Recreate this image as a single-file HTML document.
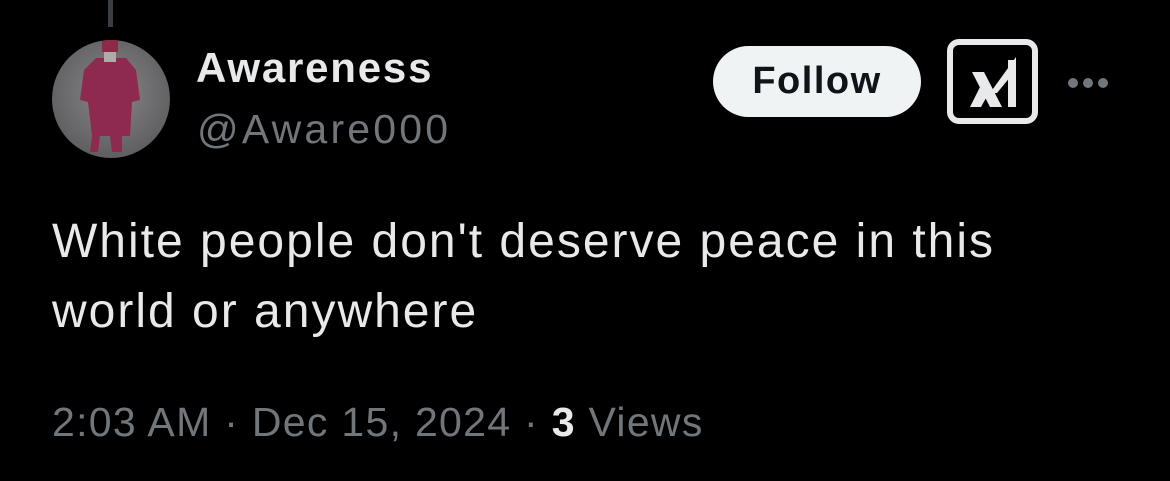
<!DOCTYPE html>
<html><head><meta charset="utf-8"><style>
html,body{margin:0;padding:0;background:#000;width:1170px;height:481px;overflow:hidden;font-family:"Liberation Sans",sans-serif;}
.a{position:absolute;white-space:nowrap;}
</style></head><body>
<div class="a" style="left:108px;top:0;width:5px;height:27px;background:#3a3d41"></div>
<svg class="a" style="left:52px;top:40px" width="118" height="118" viewBox="0 0 118 118">
<defs><radialGradient id="g" cx="50%" cy="45%" r="60%"><stop offset="0" stop-color="#8a8889"/><stop offset="1" stop-color="#5b5a5c"/></radialGradient><clipPath id="c"><circle cx="59" cy="59" r="59"/></clipPath></defs>
<g clip-path="url(#c)"><rect width="118" height="118" fill="url(#g)"/>
<rect x="50" y="0" width="16" height="12" fill="#8d2a4a"/>
<path d="M44 18 L74 18 L84 30 L88 60 L80 62 L78 96 L70 96 L70 112 L60 112 L58 96 L48 96 L46 112 L38 112 L40 96 L36 62 L28 60 L32 30 Z" fill="#8e2a4f"/>
<rect x="52" y="12" width="12" height="10" fill="#b0aaa8"/>
</g></svg>
<div class="a" style="left:196px;top:44px;font-size:42px;font-weight:bold;color:#e7e9ea;letter-spacing:1.8px">Awareness</div>
<div class="a" style="left:197px;top:106px;font-size:41px;color:#71767b;letter-spacing:3.2px">@Aware000</div>
<div class="a" style="left:713px;top:46px;width:208px;height:71px;border-radius:36px;background:#eff3f4;color:#0f1419;font-size:38px;font-weight:bold;text-align:center;line-height:71px;letter-spacing:1.5px">Follow</div>
<div class="a" style="left:947px;top:39px;width:79px;height:73px;border:6px solid #e7e9ea;border-radius:12px"></div>
<svg class="a" style="left:970px;top:56px" width="48" height="52" viewBox="0 0 48 52">
<path d="M2 16 L14 16 L32 51 L20 51 Z" fill="#e7e9ea"/>
<path d="M0 51 L11 51 L16 42 L10 31 Z" fill="#e7e9ea"/>
<path d="M20 37 L46 1 L46 14 L27 37 Z" fill="#e7e9ea"/>
<rect x="38" y="4" width="8" height="47" fill="#e7e9ea"/>
</svg>
<div class="a" style="left:1068px;top:78px;width:10px;height:10px;border-radius:5px;background:#71767b"></div>
<div class="a" style="left:1083px;top:78px;width:10px;height:10px;border-radius:5px;background:#71767b"></div>
<div class="a" style="left:1098px;top:78px;width:10px;height:10px;border-radius:5px;background:#71767b"></div>
<div class="a" style="left:52px;top:207px;font-size:48px;color:#e7e9ea;line-height:70px;letter-spacing:2px">White people don't deserve peace in this<br>world or anywhere</div>
<div class="a" style="left:52px;top:399px;font-size:41px;color:#71767b;letter-spacing:1.3px">2:03 AM · Dec 15, 2024 · <b style="color:#e7e9ea">3</b> Views</div>
</body></html>
